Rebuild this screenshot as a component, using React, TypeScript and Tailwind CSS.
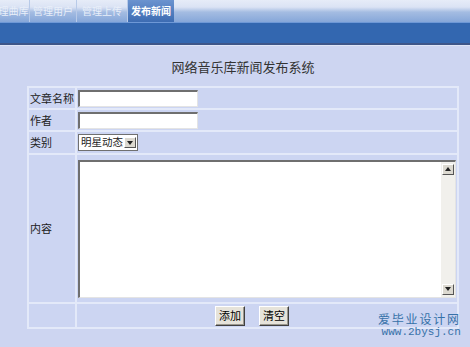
import React from "react";

function Inset({ className = "", children }: { className?: string; children?: React.ReactNode }) {
  return (
    <div
      className={
        "border-t-2 border-l-2 border-b border-r border-t-[#6f6f6f] border-l-[#6f6f6f] border-b-[#e4e4e4] border-r-[#e4e4e4] bg-white " +
        className
      }
    >
      {children}
    </div>
  );
}

function Btn({ children }: { children: React.ReactNode }) {
  return (
    <div className="h-[20px] px-[3px] flex items-center justify-center bg-[#e6e3da] border border-t-white border-l-white border-b-[#404040] border-r-[#404040] shadow-[inset_-1px_-1px_0_#9a978e] text-[11px] leading-none text-black whitespace-nowrap">
      {children}
    </div>
  );
}

function ArrowBtn({ up }: { up?: boolean }) {
  return (
    <div className="w-[12px] h-[11px] bg-[#dcd9d0] border border-t-white border-l-white border-b-[#555] border-r-[#555] flex items-center justify-center">
      <svg width="6" height="4" viewBox="0 0 6 4">
        {up ? <polygon points="0,4 6,4 3,0" fill="#222" /> : <polygon points="0,0 6,0 3,4" fill="#222" />}
      </svg>
    </div>
  );
}

export default function App() {
  const cell = "bg-[#ccd5f2]";
  return (
    <div className="w-[470px] h-[347px] bg-[#cdd5f1] relative overflow-hidden font-['Noto_Sans_CJK_SC',sans-serif]">
      {/* tab strip */}
      <div className="h-[22px] flex bg-[linear-gradient(#e6ecf8_0%,#dbe3f4_32%,#a4bce2_55%,#86a7d9_100%)] overflow-hidden">
        <div className="ml-[-12px] w-[42px] flex items-center justify-center text-[10px] leading-none text-[#e9eff9] border-r border-r-[#b8cae8] whitespace-nowrap">管理曲库</div>
        <div className="w-[47px] flex items-center justify-center text-[10px] leading-none text-[#e9eff9] border-r border-r-[#b8cae8] whitespace-nowrap">管理用户</div>
        <div className="w-[51px] flex items-center justify-center text-[10px] leading-none text-[#e9eff9] border-r border-r-[#b8cae8] whitespace-nowrap">管理上传</div>
        <div className="w-[46px] flex items-center justify-center text-[10px] leading-none font-bold text-white bg-[linear-gradient(#6b93cf,#3d6cb2)] whitespace-nowrap">发布新闻</div>
      </div>
      {/* blue bar */}
      <div className="h-[1px] bg-[#6e98d6]" />
      <div className="h-[20px] bg-[#3367b0]" />
      <div className="h-[2px] bg-[#3e5689]" />
      <div className="h-[1px] bg-[#dfe5f6]" />
      {/* title */}
      <div className="ml-[27px] w-[432px] h-[40px] flex items-center justify-center text-[13px] leading-none text-[#333]">
        网络音乐库新闻发布系统
      </div>
      {/* table */}
      <div className="ml-[27px] w-[432px] bg-[#e3e9f9] p-[2px] flex flex-col gap-[2px] text-[11px] leading-none text-[#222] whitespace-nowrap">
        <div className="flex gap-[2px] h-[20px]">
          <div className={cell + " w-[46px] flex items-center pl-[1px]"}>文章名称</div>
          <div className={cell + " flex-1 flex items-center pl-[1px]"}>
            <Inset className="w-[120px] h-[17px]" />
          </div>
        </div>
        <div className="flex gap-[2px] h-[20px]">
          <div className={cell + " w-[46px] flex items-center pl-[1px]"}>作者</div>
          <div className={cell + " flex-1 flex items-center pl-[1px]"}>
            <Inset className="w-[120px] h-[17px]" />
          </div>
        </div>
        <div className="flex gap-[2px] h-[21px]">
          <div className={cell + " w-[46px] flex items-center pl-[1px]"}>类别</div>
          <div className={cell + " flex-1 flex items-center pl-[1px]"}>
            <div className="w-[60px] h-[17px] border border-[#707070] bg-white flex items-center justify-between pl-[2px] pr-[1px]">
              <span className="text-[10.5px] leading-none">明星动态</span>
              <ArrowBtn />
            </div>
          </div>
        </div>
        <div className="flex gap-[2px] h-[147px]">
          <div className={cell + " w-[46px] flex items-center pl-[1px]"}>内容</div>
          <div className={cell + " flex-1 flex items-center pl-[1px]"}>
            <Inset className="w-[378px] h-[138px] flex justify-end">
              <div className="w-[14px] h-full bg-[#f1f0ec] flex flex-col justify-between items-center py-[2px]">
                <ArrowBtn up />
                <ArrowBtn />
              </div>
            </Inset>
          </div>
        </div>
        <div className="flex gap-[2px] h-[23px]">
          <div className={cell + " w-[46px]"} />
          <div className={cell + " flex-1 flex items-center pl-[138px] gap-[14px]"}>
            <Btn>添加</Btn>
            <Btn>清空</Btn>
          </div>
        </div>
      </div>
      {/* watermark */}
      <div className="absolute left-[378px] top-[312px] flex flex-col items-end text-[#3671a8]">
        <div className="text-[12px] leading-[14px] tracking-[1.8px]">爱毕业设计网</div>
        <div className="font-['Liberation_Mono',monospace] text-[11px] leading-[13px]">www.2bysj.cn</div>
      </div>
    </div>
  );
}
